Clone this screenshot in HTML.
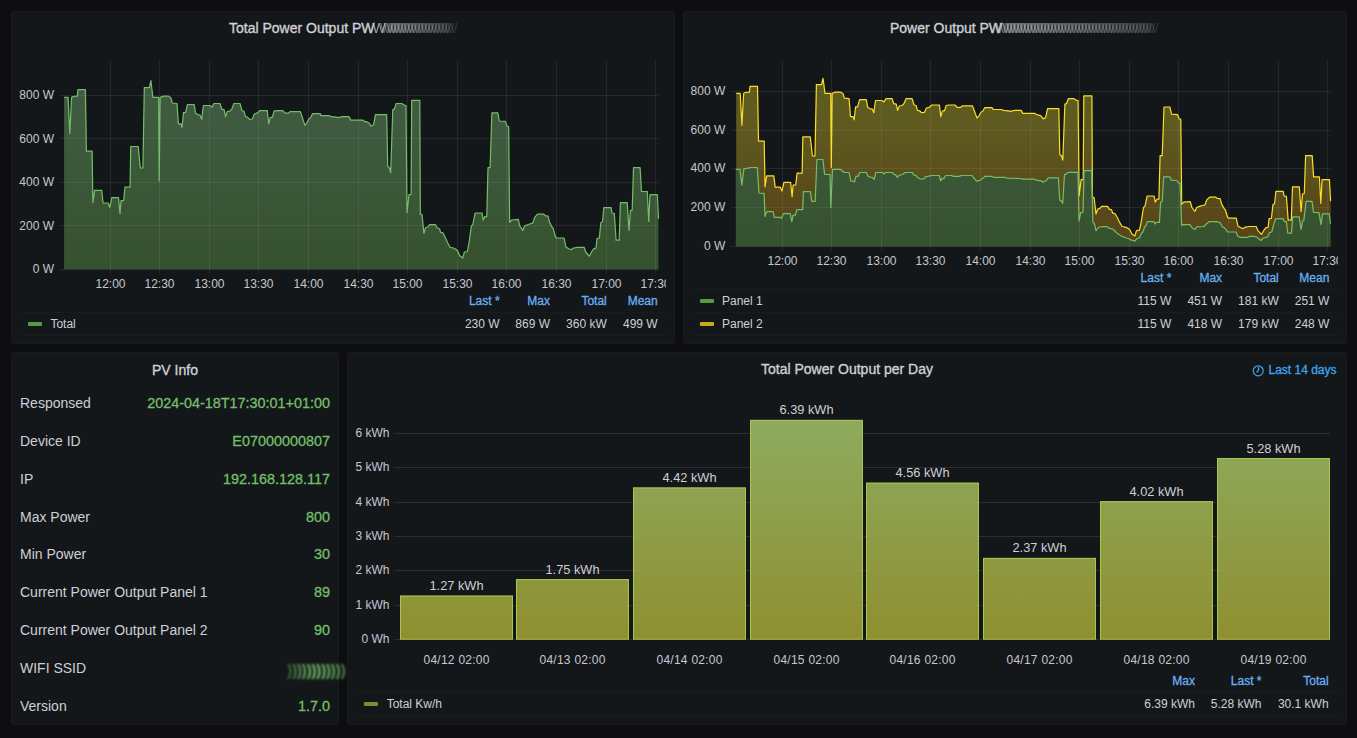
<!DOCTYPE html><html><head><meta charset="utf-8"><style>
html,body{margin:0;padding:0;background:#0e0e12;width:1357px;height:738px;overflow:hidden}
svg{display:block}
text{font-family:"Liberation Sans", sans-serif}
</style></head><body>
<svg width="1357" height="738" viewBox="0 0 1357 738">
<defs>
<linearGradient id="g1" gradientUnits="userSpaceOnUse" x1="0" y1="60" x2="0" y2="269.5"><stop offset="0" stop-color="#435c46"/><stop offset="0.45" stop-color="#3d593c"/><stop offset="1" stop-color="#36512d"/></linearGradient>
<linearGradient id="g2" gradientUnits="userSpaceOnUse" x1="0" y1="60" x2="0" y2="246.2"><stop offset="0" stop-color="#435c46"/><stop offset="0.45" stop-color="#3d593c"/><stop offset="1" stop-color="#36512d"/></linearGradient>
<linearGradient id="y2" gradientUnits="userSpaceOnUse" x1="0" y1="60" x2="0" y2="246.2"><stop offset="0" stop-color="#5f5d21"/><stop offset="0.35" stop-color="#5e5a20"/><stop offset="0.75" stop-color="#5a4a1a"/><stop offset="1" stop-color="#584318"/></linearGradient>
<linearGradient id="bar" gradientUnits="userSpaceOnUse" x1="0" y1="420" x2="0" y2="639"><stop offset="0" stop-color="#8dab5e"/><stop offset="1" stop-color="#8f8f30"/></linearGradient>
<filter id="blur2" x="-20%" y="-50%" width="140%" height="200%"><feGaussianBlur stdDeviation="1.0 0.9"/></filter><filter id="blur" x="-20%" y="-50%" width="140%" height="200%"><feGaussianBlur stdDeviation="0.6 0.25"/></filter>
<clipPath id="cp1"><rect x="20" y="20" width="646" height="315"/></clipPath>
<clipPath id="cp2"><rect x="692" y="20" width="646" height="315"/></clipPath>
</defs>
<rect x="11.5" y="11.5" width="663" height="332" rx="2.5" fill="#14171a" stroke="#181b1e" stroke-width="1"/>
<rect x="683.5" y="11.5" width="663" height="332" rx="2.5" fill="#14171a" stroke="#181b1e" stroke-width="1"/>
<rect x="11.5" y="352.5" width="327" height="372" rx="2.5" fill="#14171a" stroke="#181b1e" stroke-width="1"/>
<rect x="347.5" y="352.5" width="999" height="372" rx="2.5" fill="#14171a" stroke="#181b1e" stroke-width="1"/>
<g clip-path="url(#cp1)">
<text x="110.5" y="287.5" font-size="12" fill="#c7c7cf" text-anchor="middle">12:00</text>
<text x="159.5" y="287.5" font-size="12" fill="#c7c7cf" text-anchor="middle">12:30</text>
<text x="209.5" y="287.5" font-size="12" fill="#c7c7cf" text-anchor="middle">13:00</text>
<text x="258.5" y="287.5" font-size="12" fill="#c7c7cf" text-anchor="middle">13:30</text>
<text x="308.5" y="287.5" font-size="12" fill="#c7c7cf" text-anchor="middle">14:00</text>
<text x="358.5" y="287.5" font-size="12" fill="#c7c7cf" text-anchor="middle">14:30</text>
<text x="407.5" y="287.5" font-size="12" fill="#c7c7cf" text-anchor="middle">15:00</text>
<text x="457.5" y="287.5" font-size="12" fill="#c7c7cf" text-anchor="middle">15:30</text>
<text x="506.5" y="287.5" font-size="12" fill="#c7c7cf" text-anchor="middle">16:00</text>
<text x="556.5" y="287.5" font-size="12" fill="#c7c7cf" text-anchor="middle">16:30</text>
<text x="606.5" y="287.5" font-size="12" fill="#c7c7cf" text-anchor="middle">17:00</text>
<text x="655.5" y="287.5" font-size="12" fill="#c7c7cf" text-anchor="middle">17:30</text>
</g>
<text x="54.0" y="273.1" font-size="12" fill="#c7c7cf" text-anchor="end">0 W</text>
<text x="54.0" y="229.5" font-size="12" fill="#c7c7cf" text-anchor="end">200 W</text>
<text x="54.0" y="186.0" font-size="12" fill="#c7c7cf" text-anchor="end">400 W</text>
<text x="54.0" y="142.5" font-size="12" fill="#c7c7cf" text-anchor="end">600 W</text>
<text x="54.0" y="98.9" font-size="12" fill="#c7c7cf" text-anchor="end">800 W</text>
<polygon points="64.1,269.3 64.1,97.4 68.1,97.4 69.8,133.5 71.6,97.4 73.8,96.3 77.3,96.1 77.9,89.6 85.4,89.6 86.4,151.2 92.1,151.2 92.9,202.6 94.6,190.4 101.7,190.4 103.1,203.0 108.2,203.0 109.8,207.5 111.8,197.6 118.5,197.6 120.0,213.8 121.0,200.6 123.6,200.6 125.0,187.2 130.1,187.2 130.7,146.5 138.2,146.5 140.3,168.0 142.9,168.0 144.3,87.6 149.4,87.6 150.9,80.7 152.9,97.4 158.6,97.4 159.2,181.0 160.1,97.4 163.5,96.1 168.2,96.1 170.9,97.8 172.3,103.0 177.0,103.5 178.4,123.8 181.0,123.8 182.0,127.4 183.5,112.6 185.5,112.6 187.5,104.5 194.2,104.5 195.6,113.2 197.7,114.6 200.1,115.2 201.7,119.3 203.4,105.5 209.9,105.5 211.9,107.1 214.0,103.5 220.0,103.5 221.7,109.1 224.1,109.6 225.5,116.7 227.2,111.6 229.8,111.2 231.8,109.1 233.9,103.5 240.0,103.5 242.0,110.6 244.0,111.2 245.4,116.7 247.5,117.1 249.5,119.3 252.3,119.0 254.3,114.0 257.1,113.2 259.8,110.6 267.3,110.6 268.7,123.8 270.3,117.3 272.4,117.3 274.0,111.2 276.8,110.6 282.9,110.6 285.0,113.2 288.6,113.2 290.0,111.6 300.4,111.6 302.4,117.7 304.9,125.4 306.9,122.8 308.9,118.7 310.6,117.7 312.6,113.6 320.1,113.6 321.1,115.7 329.3,115.7 331.3,116.7 336.4,117.1 338.4,117.7 342.5,116.7 349.1,116.7 350.7,120.1 362.9,120.1 364.3,121.3 367.8,122.2 369.4,123.4 371.0,126.2 373.5,124.8 375.5,114.6 386.7,114.6 387.7,166.5 389.3,167.5 390.7,172.6 392.8,109.6 394.4,109.1 396.2,103.5 401.9,103.5 403.9,105.1 406.0,105.5 407.0,212.8 409.0,194.5 411.1,194.5 411.7,100.4 419.8,100.4 420.3,214.2 422.0,214.7 423.9,233.3 425.5,227.7 427.8,227.0 429.5,224.7 435.5,224.7 437.1,227.7 439.5,228.7 440.6,232.4 443.0,232.9 444.8,236.4 447.6,242.7 450.0,247.3 453.5,248.0 455.8,249.2 457.7,251.0 459.8,255.7 462.8,258.0 464.4,252.0 467.4,251.5 469.3,241.0 471.4,225.9 472.8,224.7 475.1,213.0 482.1,213.0 483.1,220.0 484.9,216.6 486.8,216.6 488.0,167.6 490.1,167.6 491.9,112.8 497.8,112.8 499.4,121.0 505.4,121.4 507.1,126.1 508.7,126.8 509.6,222.4 511.7,220.0 518.2,219.3 519.8,225.9 522.8,230.5 524.5,225.9 527.5,224.7 531.0,223.5 532.8,223.1 534.5,217.7 537.5,214.2 543.8,214.2 545.0,215.6 548.0,216.1 549.6,222.4 552.0,227.0 553.1,228.2 555.5,237.0 556.6,238.0 564.1,238.0 565.9,246.9 568.7,248.7 571.1,249.7 573.4,248.0 577.6,247.3 584.1,247.3 585.8,252.0 589.3,256.2 592.1,251.0 593.9,248.7 596.0,248.2 597.0,238.5 599.3,238.1 600.9,222.5 602.5,221.8 603.8,207.7 611.1,207.7 612.0,213.0 614.3,213.4 616.1,240.2 619.2,240.2 620.4,202.6 627.2,202.6 629.0,230.4 630.4,210.7 632.2,210.2 633.5,167.7 640.1,167.7 641.5,191.5 647.3,191.5 648.7,221.4 650.0,194.6 657.3,194.6 658.5,218.8 658.4,269.3" fill="url(#g1)"/>
<g clip-path="url(#cp1)" stroke="rgba(210,212,222,0.09)" stroke-width="1">
<path d="M59.0,269.5H658.5M59.0,225.5H658.5M59.0,182.5H658.5M59.0,138.5H658.5M59.0,95.5H658.5M110.5,61.0V273.5M159.5,61.0V273.5M209.5,61.0V273.5M258.5,61.0V273.5M308.5,61.0V273.5M358.5,61.0V273.5M407.5,61.0V273.5M457.5,61.0V273.5M506.5,61.0V273.5M556.5,61.0V273.5M606.5,61.0V273.5M655.5,61.0V273.5" fill="none"/>
</g>
<polyline points="64.1,97.4 68.1,97.4 69.8,133.5 71.6,97.4 73.8,96.3 77.3,96.1 77.9,89.6 85.4,89.6 86.4,151.2 92.1,151.2 92.9,202.6 94.6,190.4 101.7,190.4 103.1,203.0 108.2,203.0 109.8,207.5 111.8,197.6 118.5,197.6 120.0,213.8 121.0,200.6 123.6,200.6 125.0,187.2 130.1,187.2 130.7,146.5 138.2,146.5 140.3,168.0 142.9,168.0 144.3,87.6 149.4,87.6 150.9,80.7 152.9,97.4 158.6,97.4 159.2,181.0 160.1,97.4 163.5,96.1 168.2,96.1 170.9,97.8 172.3,103.0 177.0,103.5 178.4,123.8 181.0,123.8 182.0,127.4 183.5,112.6 185.5,112.6 187.5,104.5 194.2,104.5 195.6,113.2 197.7,114.6 200.1,115.2 201.7,119.3 203.4,105.5 209.9,105.5 211.9,107.1 214.0,103.5 220.0,103.5 221.7,109.1 224.1,109.6 225.5,116.7 227.2,111.6 229.8,111.2 231.8,109.1 233.9,103.5 240.0,103.5 242.0,110.6 244.0,111.2 245.4,116.7 247.5,117.1 249.5,119.3 252.3,119.0 254.3,114.0 257.1,113.2 259.8,110.6 267.3,110.6 268.7,123.8 270.3,117.3 272.4,117.3 274.0,111.2 276.8,110.6 282.9,110.6 285.0,113.2 288.6,113.2 290.0,111.6 300.4,111.6 302.4,117.7 304.9,125.4 306.9,122.8 308.9,118.7 310.6,117.7 312.6,113.6 320.1,113.6 321.1,115.7 329.3,115.7 331.3,116.7 336.4,117.1 338.4,117.7 342.5,116.7 349.1,116.7 350.7,120.1 362.9,120.1 364.3,121.3 367.8,122.2 369.4,123.4 371.0,126.2 373.5,124.8 375.5,114.6 386.7,114.6 387.7,166.5 389.3,167.5 390.7,172.6 392.8,109.6 394.4,109.1 396.2,103.5 401.9,103.5 403.9,105.1 406.0,105.5 407.0,212.8 409.0,194.5 411.1,194.5 411.7,100.4 419.8,100.4 420.3,214.2 422.0,214.7 423.9,233.3 425.5,227.7 427.8,227.0 429.5,224.7 435.5,224.7 437.1,227.7 439.5,228.7 440.6,232.4 443.0,232.9 444.8,236.4 447.6,242.7 450.0,247.3 453.5,248.0 455.8,249.2 457.7,251.0 459.8,255.7 462.8,258.0 464.4,252.0 467.4,251.5 469.3,241.0 471.4,225.9 472.8,224.7 475.1,213.0 482.1,213.0 483.1,220.0 484.9,216.6 486.8,216.6 488.0,167.6 490.1,167.6 491.9,112.8 497.8,112.8 499.4,121.0 505.4,121.4 507.1,126.1 508.7,126.8 509.6,222.4 511.7,220.0 518.2,219.3 519.8,225.9 522.8,230.5 524.5,225.9 527.5,224.7 531.0,223.5 532.8,223.1 534.5,217.7 537.5,214.2 543.8,214.2 545.0,215.6 548.0,216.1 549.6,222.4 552.0,227.0 553.1,228.2 555.5,237.0 556.6,238.0 564.1,238.0 565.9,246.9 568.7,248.7 571.1,249.7 573.4,248.0 577.6,247.3 584.1,247.3 585.8,252.0 589.3,256.2 592.1,251.0 593.9,248.7 596.0,248.2 597.0,238.5 599.3,238.1 600.9,222.5 602.5,221.8 603.8,207.7 611.1,207.7 612.0,213.0 614.3,213.4 616.1,240.2 619.2,240.2 620.4,202.6 627.2,202.6 629.0,230.4 630.4,210.7 632.2,210.2 633.5,167.7 640.1,167.7 641.5,191.5 647.3,191.5 648.7,221.4 650.0,194.6 657.3,194.6 658.5,218.8" fill="none" stroke="#73bf69" stroke-width="1.2" stroke-linejoin="round"/>
<g clip-path="url(#cp2)">
<text x="782.5" y="265.0" font-size="12" fill="#c7c7cf" text-anchor="middle">12:00</text>
<text x="831.5" y="265.0" font-size="12" fill="#c7c7cf" text-anchor="middle">12:30</text>
<text x="881.5" y="265.0" font-size="12" fill="#c7c7cf" text-anchor="middle">13:00</text>
<text x="930.5" y="265.0" font-size="12" fill="#c7c7cf" text-anchor="middle">13:30</text>
<text x="980.5" y="265.0" font-size="12" fill="#c7c7cf" text-anchor="middle">14:00</text>
<text x="1030.5" y="265.0" font-size="12" fill="#c7c7cf" text-anchor="middle">14:30</text>
<text x="1079.5" y="265.0" font-size="12" fill="#c7c7cf" text-anchor="middle">15:00</text>
<text x="1129.5" y="265.0" font-size="12" fill="#c7c7cf" text-anchor="middle">15:30</text>
<text x="1178.5" y="265.0" font-size="12" fill="#c7c7cf" text-anchor="middle">16:00</text>
<text x="1228.5" y="265.0" font-size="12" fill="#c7c7cf" text-anchor="middle">16:30</text>
<text x="1278.5" y="265.0" font-size="12" fill="#c7c7cf" text-anchor="middle">17:00</text>
<text x="1327.5" y="265.0" font-size="12" fill="#c7c7cf" text-anchor="middle">17:30</text>
</g>
<text x="725.3" y="249.8" font-size="12" fill="#c7c7cf" text-anchor="end">0 W</text>
<text x="725.3" y="211.1" font-size="12" fill="#c7c7cf" text-anchor="end">200 W</text>
<text x="725.3" y="172.4" font-size="12" fill="#c7c7cf" text-anchor="end">400 W</text>
<text x="725.3" y="133.7" font-size="12" fill="#c7c7cf" text-anchor="end">600 W</text>
<text x="725.3" y="95.0" font-size="12" fill="#c7c7cf" text-anchor="end">800 W</text>
<polygon points="736.2,246.2 736.2,93.3 740.2,93.3 741.9,125.3 743.7,93.3 745.9,92.3 749.4,92.1 750.0,86.3 757.5,86.3 758.5,141.1 764.2,141.1 765.0,186.8 766.7,175.9 773.8,175.9 775.2,187.1 780.3,187.1 781.9,191.1 783.9,182.3 790.6,182.3 792.1,196.7 793.1,185.0 795.7,185.0 797.1,173.1 802.2,173.1 802.8,136.9 810.3,136.9 812.4,156.0 815.0,156.0 816.4,84.6 821.5,84.6 823.0,78.4 825.0,93.3 830.7,93.3 831.3,167.6 832.2,93.3 835.6,92.1 840.3,92.1 843.0,93.6 844.4,98.2 849.1,98.7 850.5,116.7 853.1,116.7 854.1,119.9 855.6,106.8 857.6,106.8 859.6,99.6 866.3,99.6 867.7,107.3 869.8,108.6 872.2,109.1 873.8,112.7 875.5,100.5 882.0,100.5 884.0,101.9 886.1,98.7 892.1,98.7 893.8,103.7 896.2,104.1 897.6,110.4 899.3,105.9 901.9,105.5 903.9,103.7 906.0,98.7 912.1,98.7 914.1,105.0 916.1,105.5 917.5,110.4 919.6,110.8 921.6,112.7 924.4,112.5 926.4,108.0 929.2,107.3 931.9,105.0 939.4,105.0 940.8,116.7 942.4,110.9 944.5,110.9 946.1,105.5 948.9,105.0 955.0,105.0 957.1,107.3 960.7,107.3 962.1,105.9 972.5,105.9 974.5,111.3 977.0,118.1 979.0,115.8 981.0,112.2 982.7,111.3 984.7,107.7 992.2,107.7 993.2,109.5 1001.4,109.5 1003.4,110.4 1008.5,110.8 1010.5,111.3 1014.6,110.4 1021.2,110.4 1022.8,113.4 1035.0,113.4 1036.4,114.5 1039.9,115.3 1041.5,116.4 1043.1,118.9 1045.6,117.6 1047.6,108.6 1058.8,108.6 1059.8,154.7 1061.4,155.6 1062.8,160.1 1064.9,104.1 1066.5,103.7 1068.3,98.7 1074.0,98.7 1076.0,100.1 1078.1,100.5 1079.1,195.8 1081.1,179.6 1083.2,179.6 1083.8,95.9 1091.9,95.9 1092.4,197.1 1094.1,197.5 1096.0,214.0 1097.6,209.1 1099.9,208.4 1101.6,206.4 1107.6,206.4 1109.2,209.1 1111.6,209.9 1112.7,213.2 1115.1,213.7 1116.9,216.8 1119.7,222.4 1122.1,226.5 1125.6,227.1 1127.9,228.2 1129.8,229.8 1131.9,233.9 1134.9,236.0 1136.5,230.6 1139.5,230.2 1141.4,220.9 1143.5,207.5 1144.9,206.4 1147.2,196.0 1154.2,196.0 1155.2,202.2 1157.0,199.2 1158.9,199.2 1160.1,155.6 1162.2,155.6 1164.0,107.0 1169.9,107.0 1171.5,114.2 1177.5,114.6 1179.2,118.8 1180.8,119.4 1181.7,204.3 1183.8,202.2 1190.3,201.6 1191.9,207.5 1194.9,211.5 1196.6,207.5 1199.6,206.4 1203.1,205.3 1204.9,205.0 1206.6,200.2 1209.6,197.1 1215.9,197.1 1217.1,198.3 1220.1,198.7 1221.7,204.3 1224.1,208.4 1225.2,209.5 1227.6,217.3 1228.7,218.2 1236.2,218.2 1238.0,226.1 1240.8,227.7 1243.2,228.6 1245.5,227.1 1249.7,226.5 1256.2,226.5 1257.9,230.6 1261.4,234.4 1264.2,229.8 1266.0,227.7 1268.1,227.3 1269.1,218.7 1271.4,218.3 1273.0,204.4 1274.6,203.8 1275.9,191.3 1283.2,191.3 1284.1,196.0 1286.4,196.3 1288.2,220.2 1291.3,220.2 1292.5,186.8 1299.3,186.8 1301.1,211.5 1302.5,193.9 1304.3,193.5 1305.6,155.7 1312.2,155.7 1313.6,176.9 1319.4,176.9 1320.8,203.5 1322.1,179.6 1329.4,179.6 1330.6,201.1 1330.6,246.2" fill="url(#y2)"/>
<polygon points="735.8,246.2 735.8,169.4 740.0,169.4 741.8,185.2 743.9,168.9 749.3,167.9 749.6,167.5 757.3,167.5 759.0,193.0 764.1,193.4 765.0,216.5 766.7,211.6 773.1,211.6 774.4,217.4 780.2,217.4 781.7,218.3 783.4,213.6 790.2,213.6 791.8,221.7 793.1,215.2 795.4,215.2 796.9,209.7 802.7,209.7 803.4,191.7 810.4,191.7 811.7,201.3 815.2,201.3 816.9,159.5 822.9,159.5 824.6,174.3 830.1,174.5 830.8,207.7 832.5,169.3 840.2,169.3 841.5,170.3 844.3,172.5 849.2,172.5 850.7,180.9 853.6,181.5 854.6,181.9 855.9,176.4 858.2,176.4 859.7,172.5 866.4,172.5 868.1,176.4 870.0,177.0 872.6,177.7 874.2,179.3 875.8,172.5 882.7,172.5 883.9,174.2 885.2,172.5 892.2,172.5 893.9,174.2 895.8,175.1 897.3,177.3 899.0,175.5 902.2,174.5 905.4,172.5 912.5,172.5 913.8,175.1 916.1,175.5 917.0,177.0 920.2,179.0 923.9,179.0 925.4,176.8 930.9,175.7 932.2,175.5 939.3,175.5 940.6,180.9 941.9,178.6 943.8,178.6 945.7,175.5 951.5,175.5 953.5,176.4 959.3,176.4 961.2,175.5 972.1,175.5 974.1,178.3 976.6,181.1 978.6,180.6 980.5,180.2 982.0,178.6 983.7,177.7 985.0,176.4 992.1,176.4 993.4,177.3 1004.9,177.3 1006.9,178.1 1020.4,178.5 1022.5,179.1 1034.6,179.1 1036.0,180.1 1041.4,180.9 1043.2,182.2 1045.1,181.2 1046.4,180.5 1048.2,177.8 1058.4,177.8 1059.7,200.1 1061.1,200.8 1062.7,203.5 1064.5,174.4 1066.2,174.1 1067.8,172.4 1078.0,172.4 1079.0,221.1 1080.7,212.6 1083.0,212.3 1084.1,170.6 1091.6,170.6 1092.9,222.5 1094.3,223.2 1096.0,230.6 1098.3,227.5 1099.7,227.0 1103.8,226.6 1107.1,226.6 1108.5,227.9 1110.5,228.6 1112.6,228.9 1114.3,230.5 1116.7,232.9 1119.1,234.6 1121.6,236.2 1123.4,236.8 1126.5,238.0 1129.5,239.0 1131.3,240.2 1133.8,240.5 1135.0,241.1 1136.8,238.7 1139.3,238.0 1141.5,233.2 1142.9,232.0 1144.8,226.5 1146.0,225.9 1147.2,221.6 1153.7,221.6 1154.9,224.0 1156.3,222.4 1159.4,222.4 1160.6,202.1 1162.2,201.5 1163.7,176.8 1169.8,176.8 1171.2,180.1 1176.8,180.5 1178.3,182.6 1180.1,183.4 1181.7,225.6 1183.2,224.6 1189.9,224.6 1192.0,227.7 1194.8,229.5 1196.6,226.8 1203.9,226.5 1206.8,223.4 1209.3,221.6 1216.6,221.6 1220.2,222.8 1222.1,226.5 1225.1,228.3 1227.6,232.0 1236.1,232.0 1237.9,236.2 1240.4,237.4 1247.7,237.4 1249.9,236.2 1256.2,236.6 1258.7,238.7 1260.9,240.5 1263.3,238.0 1267.8,236.8 1269.6,232.6 1271.8,232.0 1273.3,225.9 1275.5,218.8 1283.0,218.5 1284.3,221.4 1286.4,221.6 1287.8,233.1 1291.4,233.1 1292.8,216.8 1299.1,216.8 1301.1,229.4 1302.6,220.8 1303.8,220.5 1306.1,201.4 1312.0,201.4 1313.5,212.3 1319.0,212.7 1321.0,224.6 1322.5,213.8 1329.2,213.8 1330.4,223.8 1330.4,246.2" fill="url(#g2)"/>
<g clip-path="url(#cp2)" stroke="rgba(210,212,222,0.09)" stroke-width="1">
<path d="M731.0,246.5H1330.4M731.0,207.5H1330.4M731.0,168.5H1330.4M731.0,130.5H1330.4M731.0,91.5H1330.4M782.5,61.0V250.2M831.5,61.0V250.2M881.5,61.0V250.2M930.5,61.0V250.2M980.5,61.0V250.2M1030.5,61.0V250.2M1079.5,61.0V250.2M1129.5,61.0V250.2M1178.5,61.0V250.2M1228.5,61.0V250.2M1278.5,61.0V250.2M1327.5,61.0V250.2" fill="none"/>
</g>
<polyline points="736.2,93.3 740.2,93.3 741.9,125.3 743.7,93.3 745.9,92.3 749.4,92.1 750.0,86.3 757.5,86.3 758.5,141.1 764.2,141.1 765.0,186.8 766.7,175.9 773.8,175.9 775.2,187.1 780.3,187.1 781.9,191.1 783.9,182.3 790.6,182.3 792.1,196.7 793.1,185.0 795.7,185.0 797.1,173.1 802.2,173.1 802.8,136.9 810.3,136.9 812.4,156.0 815.0,156.0 816.4,84.6 821.5,84.6 823.0,78.4 825.0,93.3 830.7,93.3 831.3,167.6 832.2,93.3 835.6,92.1 840.3,92.1 843.0,93.6 844.4,98.2 849.1,98.7 850.5,116.7 853.1,116.7 854.1,119.9 855.6,106.8 857.6,106.8 859.6,99.6 866.3,99.6 867.7,107.3 869.8,108.6 872.2,109.1 873.8,112.7 875.5,100.5 882.0,100.5 884.0,101.9 886.1,98.7 892.1,98.7 893.8,103.7 896.2,104.1 897.6,110.4 899.3,105.9 901.9,105.5 903.9,103.7 906.0,98.7 912.1,98.7 914.1,105.0 916.1,105.5 917.5,110.4 919.6,110.8 921.6,112.7 924.4,112.5 926.4,108.0 929.2,107.3 931.9,105.0 939.4,105.0 940.8,116.7 942.4,110.9 944.5,110.9 946.1,105.5 948.9,105.0 955.0,105.0 957.1,107.3 960.7,107.3 962.1,105.9 972.5,105.9 974.5,111.3 977.0,118.1 979.0,115.8 981.0,112.2 982.7,111.3 984.7,107.7 992.2,107.7 993.2,109.5 1001.4,109.5 1003.4,110.4 1008.5,110.8 1010.5,111.3 1014.6,110.4 1021.2,110.4 1022.8,113.4 1035.0,113.4 1036.4,114.5 1039.9,115.3 1041.5,116.4 1043.1,118.9 1045.6,117.6 1047.6,108.6 1058.8,108.6 1059.8,154.7 1061.4,155.6 1062.8,160.1 1064.9,104.1 1066.5,103.7 1068.3,98.7 1074.0,98.7 1076.0,100.1 1078.1,100.5 1079.1,195.8 1081.1,179.6 1083.2,179.6 1083.8,95.9 1091.9,95.9 1092.4,197.1 1094.1,197.5 1096.0,214.0 1097.6,209.1 1099.9,208.4 1101.6,206.4 1107.6,206.4 1109.2,209.1 1111.6,209.9 1112.7,213.2 1115.1,213.7 1116.9,216.8 1119.7,222.4 1122.1,226.5 1125.6,227.1 1127.9,228.2 1129.8,229.8 1131.9,233.9 1134.9,236.0 1136.5,230.6 1139.5,230.2 1141.4,220.9 1143.5,207.5 1144.9,206.4 1147.2,196.0 1154.2,196.0 1155.2,202.2 1157.0,199.2 1158.9,199.2 1160.1,155.6 1162.2,155.6 1164.0,107.0 1169.9,107.0 1171.5,114.2 1177.5,114.6 1179.2,118.8 1180.8,119.4 1181.7,204.3 1183.8,202.2 1190.3,201.6 1191.9,207.5 1194.9,211.5 1196.6,207.5 1199.6,206.4 1203.1,205.3 1204.9,205.0 1206.6,200.2 1209.6,197.1 1215.9,197.1 1217.1,198.3 1220.1,198.7 1221.7,204.3 1224.1,208.4 1225.2,209.5 1227.6,217.3 1228.7,218.2 1236.2,218.2 1238.0,226.1 1240.8,227.7 1243.2,228.6 1245.5,227.1 1249.7,226.5 1256.2,226.5 1257.9,230.6 1261.4,234.4 1264.2,229.8 1266.0,227.7 1268.1,227.3 1269.1,218.7 1271.4,218.3 1273.0,204.4 1274.6,203.8 1275.9,191.3 1283.2,191.3 1284.1,196.0 1286.4,196.3 1288.2,220.2 1291.3,220.2 1292.5,186.8 1299.3,186.8 1301.1,211.5 1302.5,193.9 1304.3,193.5 1305.6,155.7 1312.2,155.7 1313.6,176.9 1319.4,176.9 1320.8,203.5 1322.1,179.6 1329.4,179.6 1330.6,201.1" fill="none" stroke="#fade2a" stroke-width="1.2" stroke-linejoin="round"/>
<polyline points="735.8,169.4 740.0,169.4 741.8,185.2 743.9,168.9 749.3,167.9 749.6,167.5 757.3,167.5 759.0,193.0 764.1,193.4 765.0,216.5 766.7,211.6 773.1,211.6 774.4,217.4 780.2,217.4 781.7,218.3 783.4,213.6 790.2,213.6 791.8,221.7 793.1,215.2 795.4,215.2 796.9,209.7 802.7,209.7 803.4,191.7 810.4,191.7 811.7,201.3 815.2,201.3 816.9,159.5 822.9,159.5 824.6,174.3 830.1,174.5 830.8,207.7 832.5,169.3 840.2,169.3 841.5,170.3 844.3,172.5 849.2,172.5 850.7,180.9 853.6,181.5 854.6,181.9 855.9,176.4 858.2,176.4 859.7,172.5 866.4,172.5 868.1,176.4 870.0,177.0 872.6,177.7 874.2,179.3 875.8,172.5 882.7,172.5 883.9,174.2 885.2,172.5 892.2,172.5 893.9,174.2 895.8,175.1 897.3,177.3 899.0,175.5 902.2,174.5 905.4,172.5 912.5,172.5 913.8,175.1 916.1,175.5 917.0,177.0 920.2,179.0 923.9,179.0 925.4,176.8 930.9,175.7 932.2,175.5 939.3,175.5 940.6,180.9 941.9,178.6 943.8,178.6 945.7,175.5 951.5,175.5 953.5,176.4 959.3,176.4 961.2,175.5 972.1,175.5 974.1,178.3 976.6,181.1 978.6,180.6 980.5,180.2 982.0,178.6 983.7,177.7 985.0,176.4 992.1,176.4 993.4,177.3 1004.9,177.3 1006.9,178.1 1020.4,178.5 1022.5,179.1 1034.6,179.1 1036.0,180.1 1041.4,180.9 1043.2,182.2 1045.1,181.2 1046.4,180.5 1048.2,177.8 1058.4,177.8 1059.7,200.1 1061.1,200.8 1062.7,203.5 1064.5,174.4 1066.2,174.1 1067.8,172.4 1078.0,172.4 1079.0,221.1 1080.7,212.6 1083.0,212.3 1084.1,170.6 1091.6,170.6 1092.9,222.5 1094.3,223.2 1096.0,230.6 1098.3,227.5 1099.7,227.0 1103.8,226.6 1107.1,226.6 1108.5,227.9 1110.5,228.6 1112.6,228.9 1114.3,230.5 1116.7,232.9 1119.1,234.6 1121.6,236.2 1123.4,236.8 1126.5,238.0 1129.5,239.0 1131.3,240.2 1133.8,240.5 1135.0,241.1 1136.8,238.7 1139.3,238.0 1141.5,233.2 1142.9,232.0 1144.8,226.5 1146.0,225.9 1147.2,221.6 1153.7,221.6 1154.9,224.0 1156.3,222.4 1159.4,222.4 1160.6,202.1 1162.2,201.5 1163.7,176.8 1169.8,176.8 1171.2,180.1 1176.8,180.5 1178.3,182.6 1180.1,183.4 1181.7,225.6 1183.2,224.6 1189.9,224.6 1192.0,227.7 1194.8,229.5 1196.6,226.8 1203.9,226.5 1206.8,223.4 1209.3,221.6 1216.6,221.6 1220.2,222.8 1222.1,226.5 1225.1,228.3 1227.6,232.0 1236.1,232.0 1237.9,236.2 1240.4,237.4 1247.7,237.4 1249.9,236.2 1256.2,236.6 1258.7,238.7 1260.9,240.5 1263.3,238.0 1267.8,236.8 1269.6,232.6 1271.8,232.0 1273.3,225.9 1275.5,218.8 1283.0,218.5 1284.3,221.4 1286.4,221.6 1287.8,233.1 1291.4,233.1 1292.8,216.8 1299.1,216.8 1301.1,229.4 1302.6,220.8 1303.8,220.5 1306.1,201.4 1312.0,201.4 1313.5,212.3 1319.0,212.7 1321.0,224.6 1322.5,213.8 1329.2,213.8 1330.4,223.8" fill="none" stroke="#73bf69" stroke-width="1.2" stroke-linejoin="round"/>
<text x="229" y="33" font-size="14" fill="#cfcfd6" stroke="#cfcfd6" stroke-width="0.35">Total Power Output PW</text>
<text x="372.5" y="33" font-size="14" fill="#c8c8d0" opacity="0.75">W</text>
<g filter="url(#blur)">
<text x="380.0" y="33.0" font-size="14" fill="#c8c8d0" opacity="0.42">W</text>
<text x="383.4" y="33.0" font-size="14" fill="#c8c8d0" opacity="0.41">W</text>
<text x="386.8" y="33.0" font-size="14" fill="#c8c8d0" opacity="0.40">W</text>
<text x="390.2" y="33.0" font-size="14" fill="#c8c8d0" opacity="0.38">W</text>
<text x="393.6" y="33.0" font-size="14" fill="#c8c8d0" opacity="0.37">W</text>
<text x="397.0" y="33.0" font-size="14" fill="#c8c8d0" opacity="0.35">W</text>
<text x="400.4" y="33.0" font-size="14" fill="#c8c8d0" opacity="0.34">W</text>
<text x="403.8" y="33.0" font-size="14" fill="#c8c8d0" opacity="0.32">W</text>
<text x="407.2" y="33.0" font-size="14" fill="#c8c8d0" opacity="0.31">W</text>
<text x="410.6" y="33.0" font-size="14" fill="#c8c8d0" opacity="0.29">W</text>
<text x="414.0" y="33.0" font-size="14" fill="#c8c8d0" opacity="0.28">W</text>
<text x="417.4" y="33.0" font-size="14" fill="#c8c8d0" opacity="0.27">W</text>
<text x="420.8" y="33.0" font-size="14" fill="#c8c8d0" opacity="0.25">W</text>
<text x="424.2" y="33.0" font-size="14" fill="#c8c8d0" opacity="0.24">W</text>
<text x="427.6" y="33.0" font-size="14" fill="#c8c8d0" opacity="0.22">W</text>
<text x="431.0" y="33.0" font-size="14" fill="#c8c8d0" opacity="0.21">W</text>
<text x="434.4" y="33.0" font-size="14" fill="#c8c8d0" opacity="0.19">W</text>
<text x="437.8" y="33.0" font-size="14" fill="#c8c8d0" opacity="0.18">W</text>
<text x="441.2" y="33.0" font-size="14" fill="#c8c8d0" opacity="0.16">W</text>
<text x="444.6" y="33.0" font-size="14" fill="#c8c8d0" opacity="0.15">W</text>
</g>
<text x="890" y="33" font-size="14" fill="#cfcfd6" stroke="#cfcfd6" stroke-width="0.35">Power Output PW</text>
<g filter="url(#blur)">
<text x="996.0" y="33.0" font-size="14" fill="#c8c8d0" opacity="0.45">W</text>
<text x="999.4" y="33.0" font-size="14" fill="#c8c8d0" opacity="0.44">W</text>
<text x="1002.8" y="33.0" font-size="14" fill="#c8c8d0" opacity="0.44">W</text>
<text x="1006.2" y="33.0" font-size="14" fill="#c8c8d0" opacity="0.43">W</text>
<text x="1009.6" y="33.0" font-size="14" fill="#c8c8d0" opacity="0.42">W</text>
<text x="1013.0" y="33.0" font-size="14" fill="#c8c8d0" opacity="0.42">W</text>
<text x="1016.4" y="33.0" font-size="14" fill="#c8c8d0" opacity="0.41">W</text>
<text x="1019.8" y="33.0" font-size="14" fill="#c8c8d0" opacity="0.40">W</text>
<text x="1023.2" y="33.0" font-size="14" fill="#c8c8d0" opacity="0.40">W</text>
<text x="1026.6" y="33.0" font-size="14" fill="#c8c8d0" opacity="0.39">W</text>
<text x="1030.0" y="33.0" font-size="14" fill="#c8c8d0" opacity="0.38">W</text>
<text x="1033.4" y="33.0" font-size="14" fill="#c8c8d0" opacity="0.38">W</text>
<text x="1036.8" y="33.0" font-size="14" fill="#c8c8d0" opacity="0.37">W</text>
<text x="1040.2" y="33.0" font-size="14" fill="#c8c8d0" opacity="0.36">W</text>
<text x="1043.6" y="33.0" font-size="14" fill="#c8c8d0" opacity="0.35">W</text>
<text x="1047.0" y="33.0" font-size="14" fill="#c8c8d0" opacity="0.35">W</text>
<text x="1050.4" y="33.0" font-size="14" fill="#c8c8d0" opacity="0.34">W</text>
<text x="1053.8" y="33.0" font-size="14" fill="#c8c8d0" opacity="0.33">W</text>
<text x="1057.2" y="33.0" font-size="14" fill="#c8c8d0" opacity="0.33">W</text>
<text x="1060.6" y="33.0" font-size="14" fill="#c8c8d0" opacity="0.32">W</text>
<text x="1064.0" y="33.0" font-size="14" fill="#c8c8d0" opacity="0.31">W</text>
<text x="1067.4" y="33.0" font-size="14" fill="#c8c8d0" opacity="0.31">W</text>
<text x="1070.8" y="33.0" font-size="14" fill="#c8c8d0" opacity="0.30">W</text>
<text x="1074.2" y="33.0" font-size="14" fill="#c8c8d0" opacity="0.29">W</text>
<text x="1077.6" y="33.0" font-size="14" fill="#c8c8d0" opacity="0.29">W</text>
<text x="1081.0" y="33.0" font-size="14" fill="#c8c8d0" opacity="0.28">W</text>
<text x="1084.4" y="33.0" font-size="14" fill="#c8c8d0" opacity="0.27">W</text>
<text x="1087.8" y="33.0" font-size="14" fill="#c8c8d0" opacity="0.27">W</text>
<text x="1091.2" y="33.0" font-size="14" fill="#c8c8d0" opacity="0.26">W</text>
<text x="1094.6" y="33.0" font-size="14" fill="#c8c8d0" opacity="0.25">W</text>
<text x="1098.0" y="33.0" font-size="14" fill="#c8c8d0" opacity="0.25">W</text>
<text x="1101.4" y="33.0" font-size="14" fill="#c8c8d0" opacity="0.24">W</text>
<text x="1104.8" y="33.0" font-size="14" fill="#c8c8d0" opacity="0.23">W</text>
<text x="1108.2" y="33.0" font-size="14" fill="#c8c8d0" opacity="0.22">W</text>
<text x="1111.6" y="33.0" font-size="14" fill="#c8c8d0" opacity="0.22">W</text>
<text x="1115.0" y="33.0" font-size="14" fill="#c8c8d0" opacity="0.21">W</text>
<text x="1118.4" y="33.0" font-size="14" fill="#c8c8d0" opacity="0.20">W</text>
<text x="1121.8" y="33.0" font-size="14" fill="#c8c8d0" opacity="0.20">W</text>
<text x="1125.2" y="33.0" font-size="14" fill="#c8c8d0" opacity="0.19">W</text>
<text x="1128.6" y="33.0" font-size="14" fill="#c8c8d0" opacity="0.18">W</text>
<text x="1132.0" y="33.0" font-size="14" fill="#c8c8d0" opacity="0.18">W</text>
<text x="1135.4" y="33.0" font-size="14" fill="#c8c8d0" opacity="0.17">W</text>
<text x="1138.8" y="33.0" font-size="14" fill="#c8c8d0" opacity="0.16">W</text>
<text x="1142.2" y="33.0" font-size="14" fill="#c8c8d0" opacity="0.16">W</text>
<text x="1145.6" y="33.0" font-size="14" fill="#c8c8d0" opacity="0.15">W</text>
</g>
<text x="499.6" y="304.5" font-size="12" fill="#6aaef0" stroke="#6aaef0" stroke-width="0.3" text-anchor="end">Last *</text>
<text x="550.0" y="304.5" font-size="12" fill="#6aaef0" stroke="#6aaef0" stroke-width="0.3" text-anchor="end">Max</text>
<text x="606.8" y="304.5" font-size="12" fill="#6aaef0" stroke="#6aaef0" stroke-width="0.3" text-anchor="end">Total</text>
<text x="657.7" y="304.5" font-size="12" fill="#6aaef0" stroke="#6aaef0" stroke-width="0.3" text-anchor="end">Mean</text>
<line x1="20" y1="312.5" x2="666" y2="312.5" stroke="#191c1f"/>
<line x1="20" y1="335.5" x2="666" y2="335.5" stroke="#191c1f"/>
<rect x="28" y="322" width="14" height="4" rx="1" fill="#589944"/>
<text x="50.4" y="327.5" font-size="12" fill="#cfcfd6">Total</text>
<text x="499.6" y="327.5" font-size="12" fill="#cfcfd6" text-anchor="end">230 W</text>
<text x="550.0" y="327.5" font-size="12" fill="#cfcfd6" text-anchor="end">869 W</text>
<text x="606.8" y="327.5" font-size="12" fill="#cfcfd6" text-anchor="end">360 kW</text>
<text x="657.7" y="327.5" font-size="12" fill="#cfcfd6" text-anchor="end">499 W</text>
<text x="1171.3" y="281.6" font-size="12" fill="#6aaef0" stroke="#6aaef0" stroke-width="0.3" text-anchor="end">Last *</text>
<text x="1222.1" y="281.6" font-size="12" fill="#6aaef0" stroke="#6aaef0" stroke-width="0.3" text-anchor="end">Max</text>
<text x="1278.8" y="281.6" font-size="12" fill="#6aaef0" stroke="#6aaef0" stroke-width="0.3" text-anchor="end">Total</text>
<text x="1329.4" y="281.6" font-size="12" fill="#6aaef0" stroke="#6aaef0" stroke-width="0.3" text-anchor="end">Mean</text>
<line x1="692" y1="289.5" x2="1338" y2="289.5" stroke="#191c1f"/>
<line x1="692" y1="312.5" x2="1338" y2="312.5" stroke="#191c1f"/>
<line x1="692" y1="335.5" x2="1338" y2="335.5" stroke="#191c1f"/>
<rect x="700" y="299" width="14" height="4" rx="1" fill="#589944"/>
<rect x="700" y="322" width="14" height="4" rx="1" fill="#c9a819"/>
<text x="722" y="304.5" font-size="12" fill="#cfcfd6">Panel 1</text>
<text x="722" y="327.5" font-size="12" fill="#cfcfd6">Panel 2</text>
<text x="1171.3" y="304.5" font-size="12" fill="#cfcfd6" text-anchor="end">115 W</text>
<text x="1222.1" y="304.5" font-size="12" fill="#cfcfd6" text-anchor="end">451 W</text>
<text x="1278.8" y="304.5" font-size="12" fill="#cfcfd6" text-anchor="end">181 kW</text>
<text x="1329.4" y="304.5" font-size="12" fill="#cfcfd6" text-anchor="end">251 W</text>
<text x="1171.3" y="327.5" font-size="12" fill="#cfcfd6" text-anchor="end">115 W</text>
<text x="1222.1" y="327.5" font-size="12" fill="#cfcfd6" text-anchor="end">418 W</text>
<text x="1278.8" y="327.5" font-size="12" fill="#cfcfd6" text-anchor="end">179 kW</text>
<text x="1329.4" y="327.5" font-size="12" fill="#cfcfd6" text-anchor="end">248 W</text>
<text x="175" y="374.7" font-size="14" fill="#cfcfd6" stroke="#cfcfd6" stroke-width="0.35" text-anchor="middle">PV Info</text>
<text x="20" y="408.0" font-size="14" fill="#cfcfd6">Responsed</text>
<text x="330" y="408.0" font-size="14.4" fill="#73bf69" stroke="#73bf69" stroke-width="0.3" text-anchor="end">2024-04-18T17:30:01+01:00</text>
<text x="20" y="445.9" font-size="14" fill="#cfcfd6">Device ID</text>
<text x="330" y="445.9" font-size="14.4" fill="#73bf69" stroke="#73bf69" stroke-width="0.3" text-anchor="end">E07000000807</text>
<text x="20" y="483.7" font-size="14" fill="#cfcfd6">IP</text>
<text x="330" y="483.7" font-size="14.4" fill="#73bf69" stroke="#73bf69" stroke-width="0.3" text-anchor="end">192.168.128.117</text>
<text x="20" y="521.5" font-size="14" fill="#cfcfd6">Max Power</text>
<text x="330" y="521.5" font-size="14.4" fill="#73bf69" stroke="#73bf69" stroke-width="0.3" text-anchor="end">800</text>
<text x="20" y="559.4" font-size="14" fill="#cfcfd6">Min Power</text>
<text x="330" y="559.4" font-size="14.4" fill="#73bf69" stroke="#73bf69" stroke-width="0.3" text-anchor="end">30</text>
<text x="20" y="597.2" font-size="14" fill="#cfcfd6">Current Power Output Panel 1</text>
<text x="330" y="597.2" font-size="14.4" fill="#73bf69" stroke="#73bf69" stroke-width="0.3" text-anchor="end">89</text>
<text x="20" y="635.1" font-size="14" fill="#cfcfd6">Current Power Output Panel 2</text>
<text x="330" y="635.1" font-size="14.4" fill="#73bf69" stroke="#73bf69" stroke-width="0.3" text-anchor="end">90</text>
<text x="20" y="673.0" font-size="14" fill="#cfcfd6">WIFI SSID</text>
<g filter="url(#blur2)">
<text x="287.0" y="676.0" font-size="16" font-weight="bold" fill="#78cc68" opacity="0.44">)</text>
<text x="291.9" y="676.0" font-size="16" font-weight="bold" fill="#78cc68" opacity="0.56">)</text>
<text x="296.7" y="676.0" font-size="16" font-weight="bold" fill="#78cc68" opacity="0.69">)</text>
<text x="301.6" y="676.0" font-size="16" font-weight="bold" fill="#78cc68" opacity="0.81">)</text>
<text x="306.4" y="676.0" font-size="16" font-weight="bold" fill="#78cc68" opacity="0.94">)</text>
<text x="311.2" y="676.0" font-size="16" font-weight="bold" fill="#78cc68" opacity="1.00">)</text>
<text x="316.1" y="676.0" font-size="16" font-weight="bold" fill="#78cc68" opacity="1.00">)</text>
<text x="320.9" y="676.0" font-size="16" font-weight="bold" fill="#78cc68" opacity="0.94">)</text>
<text x="325.8" y="676.0" font-size="16" font-weight="bold" fill="#78cc68" opacity="0.88">)</text>
<text x="330.6" y="676.0" font-size="16" font-weight="bold" fill="#78cc68" opacity="0.81">)</text>
<text x="335.5" y="676.0" font-size="16" font-weight="bold" fill="#78cc68" opacity="0.75">)</text>
<text x="340.4" y="676.0" font-size="16" font-weight="bold" fill="#78cc68" opacity="0.62">)</text>
</g>
<text x="20" y="710.8" font-size="14" fill="#cfcfd6">Version</text>
<text x="330" y="710.8" font-size="14.4" fill="#73bf69" stroke="#73bf69" stroke-width="0.3" text-anchor="end">1.7.0</text>
<text x="847" y="374.3" font-size="14" fill="#cfcfd6" stroke="#cfcfd6" stroke-width="0.35" text-anchor="middle">Total Power Output per Day</text>
<circle cx="1258.2" cy="370.8" r="5" fill="none" stroke="#3ea6e8" stroke-width="1.2"/>
<path d="M1258.6,367.6 L1258.4,370.6 L1257,372" fill="none" stroke="#3ea6e8" stroke-width="1.3" stroke-linecap="round"/>
<text x="1336.5" y="373.8" font-size="12" fill="#3ea6e8" stroke="#3ea6e8" stroke-width="0.3" text-anchor="end">Last 14 days</text>
<text x="389.5" y="643.0" font-size="12" fill="#c7c7cf" text-anchor="end">0 Wh</text>
<text x="389.5" y="609.0" font-size="12" fill="#c7c7cf" text-anchor="end">1 kWh</text>
<text x="389.5" y="574.0" font-size="12" fill="#c7c7cf" text-anchor="end">2 kWh</text>
<text x="389.5" y="540.0" font-size="12" fill="#c7c7cf" text-anchor="end">3 kWh</text>
<text x="389.5" y="506.0" font-size="12" fill="#c7c7cf" text-anchor="end">4 kWh</text>
<text x="389.5" y="471.0" font-size="12" fill="#c7c7cf" text-anchor="end">5 kWh</text>
<text x="389.5" y="437.0" font-size="12" fill="#c7c7cf" text-anchor="end">6 kWh</text>
<path d="M394.7,639.5H1330M394.7,605.5H1330M394.7,570.5H1330M394.7,536.5H1330M394.7,502.5H1330M394.7,467.5H1330M394.7,433.5H1330" fill="none" stroke="rgba(210,212,222,0.09)"/>
<rect x="400.0" y="595.6" width="113.0" height="43.6" fill="url(#bar)"/>
<rect x="516.0" y="579.1" width="113.0" height="60.1" fill="url(#bar)"/>
<rect x="633.0" y="487.5" width="113.0" height="151.7" fill="url(#bar)"/>
<rect x="750.0" y="419.9" width="113.0" height="219.3" fill="url(#bar)"/>
<rect x="866.0" y="482.7" width="113.0" height="156.5" fill="url(#bar)"/>
<rect x="983.0" y="557.9" width="113.0" height="81.3" fill="url(#bar)"/>
<rect x="1100.0" y="501.2" width="113.0" height="138.0" fill="url(#bar)"/>
<rect x="1217.0" y="458.0" width="113.0" height="181.2" fill="url(#bar)"/>
<path d="M394.7,639.5H1330M394.7,605.5H1330M394.7,570.5H1330M394.7,536.5H1330M394.7,502.5H1330M394.7,467.5H1330M394.7,433.5H1330" fill="none" stroke="rgba(215,205,225,0.045)"/>
<rect x="400.5" y="596.1" width="112.0" height="43.1" fill="none" stroke="#a9c64f" stroke-width="1"/>
<text x="456.5" y="590.1" font-size="12.8" fill="#cfcfd6" text-anchor="middle">1.27 kWh</text>
<text x="456.6" y="663.5" font-size="12" letter-spacing="0.25" fill="#c7c7cf" text-anchor="middle">04/12 02:00</text>
<rect x="516.5" y="579.6" width="112.0" height="59.6" fill="none" stroke="#a9c64f" stroke-width="1"/>
<text x="572.5" y="573.6" font-size="12.8" fill="#cfcfd6" text-anchor="middle">1.75 kWh</text>
<text x="572.6" y="663.5" font-size="12" letter-spacing="0.25" fill="#c7c7cf" text-anchor="middle">04/13 02:00</text>
<rect x="633.5" y="488.0" width="112.0" height="151.2" fill="none" stroke="#a9c64f" stroke-width="1"/>
<text x="689.5" y="482.0" font-size="12.8" fill="#cfcfd6" text-anchor="middle">4.42 kWh</text>
<text x="689.6" y="663.5" font-size="12" letter-spacing="0.25" fill="#c7c7cf" text-anchor="middle">04/14 02:00</text>
<rect x="750.5" y="420.4" width="112.0" height="218.8" fill="none" stroke="#a9c64f" stroke-width="1"/>
<text x="806.5" y="414.4" font-size="12.8" fill="#cfcfd6" text-anchor="middle">6.39 kWh</text>
<text x="806.6" y="663.5" font-size="12" letter-spacing="0.25" fill="#c7c7cf" text-anchor="middle">04/15 02:00</text>
<rect x="866.5" y="483.2" width="112.0" height="156.0" fill="none" stroke="#a9c64f" stroke-width="1"/>
<text x="922.5" y="477.2" font-size="12.8" fill="#cfcfd6" text-anchor="middle">4.56 kWh</text>
<text x="922.6" y="663.5" font-size="12" letter-spacing="0.25" fill="#c7c7cf" text-anchor="middle">04/16 02:00</text>
<rect x="983.5" y="558.4" width="112.0" height="80.8" fill="none" stroke="#a9c64f" stroke-width="1"/>
<text x="1039.5" y="552.4" font-size="12.8" fill="#cfcfd6" text-anchor="middle">2.37 kWh</text>
<text x="1039.6" y="663.5" font-size="12" letter-spacing="0.25" fill="#c7c7cf" text-anchor="middle">04/17 02:00</text>
<rect x="1100.5" y="501.7" width="112.0" height="137.5" fill="none" stroke="#a9c64f" stroke-width="1"/>
<text x="1156.5" y="495.7" font-size="12.8" fill="#cfcfd6" text-anchor="middle">4.02 kWh</text>
<text x="1156.6" y="663.5" font-size="12" letter-spacing="0.25" fill="#c7c7cf" text-anchor="middle">04/18 02:00</text>
<rect x="1217.5" y="458.5" width="112.0" height="180.7" fill="none" stroke="#a9c64f" stroke-width="1"/>
<text x="1273.5" y="452.5" font-size="12.8" fill="#cfcfd6" text-anchor="middle">5.28 kWh</text>
<text x="1273.6" y="663.5" font-size="12" letter-spacing="0.25" fill="#c7c7cf" text-anchor="middle">04/19 02:00</text>
<text x="1195.0" y="684.8" font-size="12" fill="#6aaef0" stroke="#6aaef0" stroke-width="0.3" text-anchor="end">Max</text>
<text x="1261.5" y="684.8" font-size="12" fill="#6aaef0" stroke="#6aaef0" stroke-width="0.3" text-anchor="end">Last *</text>
<text x="1328.6" y="684.8" font-size="12" fill="#6aaef0" stroke="#6aaef0" stroke-width="0.3" text-anchor="end">Total</text>
<line x1="356" y1="692.5" x2="1338" y2="692.5" stroke="#191c1f"/>
<line x1="356" y1="715.5" x2="1338" y2="715.5" stroke="#191c1f"/>
<rect x="364" y="702" width="14" height="4" rx="1" fill="#7d8a2e"/>
<text x="386.7" y="708" font-size="12" fill="#cfcfd6">Total Kw/h</text>
<text x="1195.0" y="707.6" font-size="12" fill="#cfcfd6" text-anchor="end">6.39 kWh</text>
<text x="1261.5" y="707.6" font-size="12" fill="#cfcfd6" text-anchor="end">5.28 kWh</text>
<text x="1328.6" y="707.6" font-size="12" fill="#cfcfd6" text-anchor="end">30.1 kWh</text>
</svg></body></html>
